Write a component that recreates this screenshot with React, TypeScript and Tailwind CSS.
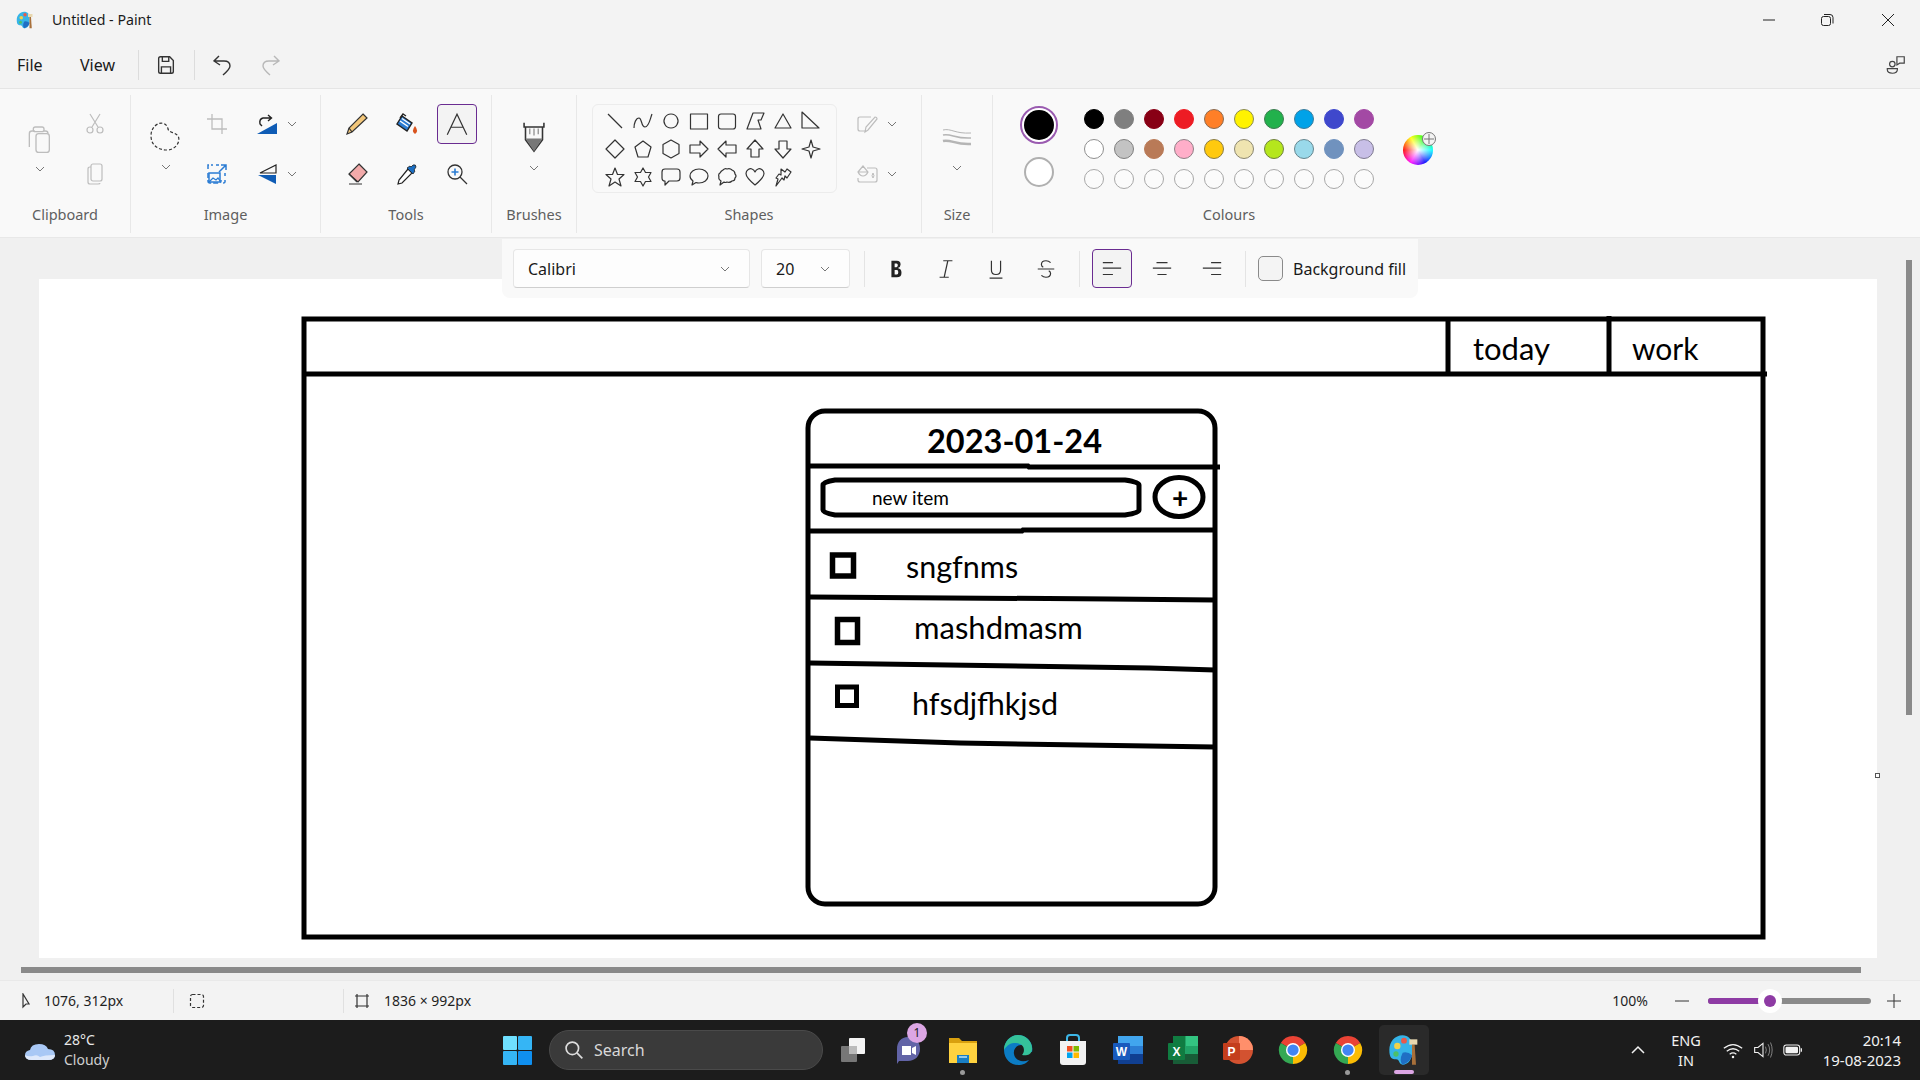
import type { ReactNode } from "react";
import clsx from "clsx";

const ui = "font-['Noto_Sans','Open_Sans',sans-serif]";
const calibri = "font-['Lato','Carlito',sans-serif]";

const row1 = [
  "bg-[#000000] border-[#000000]",
  "bg-[#7f7f7f] border-[#7f7f7f]",
  "bg-[#880015] border-[#880015]",
  "bg-[#ed1c24] border-[#ed1c24]",
  "bg-[#ff7f27] border-[#8a6a50]",
  "bg-[#fff200] border-[#8a8a50]",
  "bg-[#22b14c] border-[#3c7c50]",
  "bg-[#00a2e8] border-[#3a7c9c]",
  "bg-[#3f48cc] border-[#3f48cc]",
  "bg-[#a349a4] border-[#a349a4]",
];

const row2 = [
  "bg-[#ffffff] border-[#8f8f8f]",
  "bg-[#c3c3c3] border-[#7f7f7f]",
  "bg-[#b97a57] border-[#b97a57]",
  "bg-[#ffaec9] border-[#8f7f85]",
  "bg-[#ffc90e] border-[#8a7c45]",
  "bg-[#efe4b0] border-[#8a8670]",
  "bg-[#b5e61d] border-[#6f8040]",
  "bg-[#99d9ea] border-[#64858e]",
  "bg-[#7092be] border-[#7092be]",
  "bg-[#c8bfe7] border-[#7f7a90]",
];

function Chevron({ className }: { className?: string }) {
  return (
    <svg viewBox="0 0 12 12" className={clsx("h-3 w-3 shrink-0", className)} fill="none" stroke="#777" strokeWidth="1">
      <path d="M2 4l4 4 4-4" />
    </svg>
  );
}

function Group({ label, className, children }: { label: string; className: string; children: ReactNode }) {
  return (
    <div className={clsx("flex h-[138px] shrink-0 flex-col", className)}>
      <div className="h-[107px] pt-[4px]">{children}</div>
      <div className="text-center text-[14.500px] leading-[24px] text-[#5f5f5f]">{label}</div>
    </div>
  );
}

function Ico({ children, size = 24, box = 24 }: { children: ReactNode; size?: number; box?: number }) {
  return (
    <svg viewBox={`0 0 ${box} ${box}`} width={size} height={size} fill="none" className="shrink-0">
      {children}
    </svg>
  );
}

const shapePaths = [
  "M3 3l14 14",
  "M1 17c0-5 2-10 5-10s2 9 6 9 5-8 7-13",
  "M10 3a7 7 0 1 0 .01 0z",
  "M1.500 3h17v15h-17z",
  "M4 3h12q2.500 0 2.500 2.500v10q0 2.500-2.500 2.500h-12q-2.500 0-2.500-2.500v-10q0-2.500 2.500-2.500z",
  "M8 2h11l-3 7h-3l3 9H2z",
  "M10 3l8 14H2z",
  "M1 1l17 16H1z",
  "M10 1l9 9-9 9-9-9z",
  "M10 2l8 6-3 10H5L2 8z",
  "M10 1l8 4.500v9L10 19l-8-4.500v-9z",
  "M1 6h10V2l8 8-8 8v-4H1z",
  "M19 6H9V2l-8 8 8 8v-4h10z",
  "M10 1l8 9h-4v8H6v-8H2z",
  "M6 2h8v8h4l-8 9-8-9h4z",
  "M10 1l2 7 7 2-7 2-2 7-2-7-7-2 7-2z",
  "M10 1l2.500 6.500H19l-5 4.500 2 7-6-4-6 4 2-7-5-4.500h6.500z",
  "M10 1l2.500 4.500H18l-2.500 4.500 2.500 4.500h-5.500L10 19l-2.500-4.500H2L4.500 10 2 5.500h5.500z",
  "M4 2h12q3 0 3 3v6q0 3-3 3H8l-4 4v-4q-3 0-3-3V5q0-3 3-3z",
  "M10 2c5 0 9 3 9 7s-4 7-9 7q-2 0-3-.5L3 18l1-4q-3-2-3-5c0-4 4-7 9-7z",
  "M6 3q2-2 4-1 3-1 5 1 3 1 3 4 2 2 0 4 0 3-3 3-2 2-5 1-2 1-3 0l-4 3 1-4q-3-2-2-4-1-3 1-4 1-2 3-3z",
  "M10 18C4 13 1 10 1 6.500 1 3 5 1 7 2q2 .8 3 3 1-2.200 3-3c2-1 6 1 6 4.500 0 3.500-3 6.500-9 11.500z",
  "M8 2l4 3 2-3 4 3-4 6-2-2-1 4-2-2-6 8 2-7-2-1 3-4 2 1z",
];

function ShapeIcon({ d }: { d: string }) {
  return (
    <svg viewBox="0 0 20 20" width="20" height="20" fill="none" stroke="#333" strokeWidth="1.200" strokeLinejoin="round">
      <path d={d} />
    </svg>
  );
}

function TitleBar() {
  return (
    <div className="flex h-[45px] items-center pb-[5px] pl-[16px]">
      <PaintLogo size={18} />
      <span className="ml-[18px] text-[14.200px] text-[#1a1a1a]">Untitled - Paint</span>
      <div className="ml-auto flex items-center">
        <div className="flex w-[58px] justify-center">
          <Ico size={14} box={14}><path d="M1 7h12" stroke="#222" /></Ico>
        </div>
        <div className="flex w-[58px] justify-center">
          <Ico size={14} box={14}>
            <rect x="1.500" y="3.500" width="9" height="9" rx="2" stroke="#222" />
            <path d="M4 1.500h6q3 0 3 3v6" stroke="#222" />
          </Ico>
        </div>
        <div className="flex w-[64px] justify-center">
          <Ico size={14} box={14}><path d="M1 1l12 12M13 1L1 13" stroke="#222" /></Ico>
        </div>
      </div>
    </div>
  );
}

function MenuBar() {
  return (
    <div className="flex h-[44px] items-center border-b border-[#e5e5e5] pb-[3px] pl-[17px] pr-[13px] text-[16px] text-[#1a1a1a]">
      <span className="w-[63px]">File</span>
      <span className="w-[58px]">View</span>
      <div className="h-[30px] w-px bg-[#dcdcdc]" />
      <div className="ml-[16px]">
        <Ico size={22}>
          <path d="M4 5q0-2 2-2h10l4 4v12q0 2-2 2H6q-2 0-2-2z" stroke="#333" strokeWidth="1.500" />
          <path d="M8 3v5h7V3M7 21v-7h10v7" stroke="#333" strokeWidth="1.500" />
        </Ico>
      </div>
      <div className="ml-[17px] h-[30px] w-px bg-[#dcdcdc]" />
      <div className="ml-[16px]">
        <Ico size={24}>
          <path d="M8 3L3 8l6 4M3 8h10q6 0 6 5 0 3-7 9" stroke="#333" strokeWidth="1.400" />
        </Ico>
      </div>
      <div className="ml-[23px]">
        <Ico size={24}>
          <path d="M16 3l5 5-6 4M21 8H11q-6 0-6 5 0 3 7 9" stroke="#b8b8b8" strokeWidth="1.400" />
        </Ico>
      </div>
      <div className="ml-auto">
        <Ico size={22}>
          <circle cx="8" cy="11" r="3" stroke="#444" strokeWidth="1.300" />
          <path d="M2.500 16h11v1q0 4-5.500 4t-5.500-4z" stroke="#444" strokeWidth="1.300" />
          <path d="M13 3h8v7h-5l-3 2z" stroke="#444" strokeWidth="1.300" />
        </Ico>
      </div>
    </div>
  );
}

function Ribbon() {
  return (
    <div className="flex h-[149px] items-start border-b border-[#e8e8e8] bg-[#f9f9f9] pt-[6px]">
      <Group label="Clipboard" className="w-[131px] border-r border-[#e8e8e8]">
        <div className="flex">
          <div className="flex w-[80px] flex-col items-center pt-[24px]">
            <Ico size={32}>
              <path d="M8 6H6q-2 0-2 2v10" stroke="#bdbdbd" strokeWidth="1" />
              <rect x="7" y="3" width="8" height="3.500" rx="1.500" stroke="#bdbdbd" strokeWidth="1" />
              <rect x="9" y="8" width="10" height="14" rx="2" stroke="#bdbdbd" strokeWidth="1" />
              <path d="M15 6h1q2 0 2 2" stroke="#bdbdbd" strokeWidth="1" />
            </Ico>
            <Chevron className="mt-[8px]" />
          </div>
          <div className="flex w-[30px] flex-col">
            <div className="flex h-[50px] items-center justify-center">
              <Ico size={24}>
                <path d="M7 2l8 13M17 2L9 15" stroke="#bdbdbd" strokeWidth="1.200" />
                <circle cx="7" cy="18" r="3" stroke="#bdbdbd" strokeWidth="1.200" />
                <circle cx="17" cy="18" r="3" stroke="#bdbdbd" strokeWidth="1.200" />
              </Ico>
            </div>
            <div className="flex h-[50px] items-center justify-center">
              <Ico size={24}>
                <rect x="8" y="2" width="11" height="17" rx="2" stroke="#bdbdbd" strokeWidth="1.200" />
                <path d="M8 5H7q-2 0-2 2v13q0 2 2 2h8q2 0 2-1" stroke="#bdbdbd" strokeWidth="1.200" />
              </Ico>
            </div>
          </div>
        </div>
      </Group>

      <Group label="Image" className="w-[190px] border-r border-[#e8e8e8]">
        <div className="flex">
          <div className="flex w-[70px] flex-col items-center pt-[22px]">
            <Ico size={34} box={34}>
              <path d="M6 5c5-5 12-3 13 3 1 4 7 3 10 7 3 5-2 14-11 14C9 29 2 24 2 15 2 11 3 8 6 5z" stroke="#333" strokeWidth="1.200" strokeDasharray="3 2" />
            </Ico>
            <Chevron className="mt-[6px]" />
          </div>
          <div className="flex w-[32px] flex-col">
            <div className="flex h-[50px] items-center justify-center">
              <Ico size={24}>
                <path d="M7 2v15h15M2 7h15v15" stroke="#bdbdbd" strokeWidth="1.300" />
              </Ico>
            </div>
            <div className="flex h-[50px] items-center justify-center">
              <Ico size={24}>
                <path d="M3 7V3h5M11 3h3M3 11v8q0 2 2 2h9q2 0 2-2v-1M20 11v3M20 18v2q0 1-2 1" stroke="#2b7cd3" strokeWidth="1.500" strokeDasharray="5 2" />
                <path d="M14 10l7-7M16 3h5v5" stroke="#2b7cd3" strokeWidth="1.500" />
                <rect x="4" y="11" width="11" height="9" stroke="#2b7cd3" strokeWidth="1.500" />
                <path d="M4 20l4-4 3 2 2-2 2 3" stroke="#2b7cd3" strokeWidth="1.200" />
              </Ico>
            </div>
          </div>
          <div className="flex flex-col pl-[22px]">
            <div className="flex h-[50px] items-center gap-[7px]">
              <Ico size={24}>
                <path d="M5 12q-1-5 3-6h8M13 3l3.500 3L13 9M5 12l2 2" stroke="#222" strokeWidth="1.400" />
                <path d="M2 22l20-11v11z" fill="#0f5cb5" />
              </Ico>
              <Chevron />
            </div>
            <div className="flex h-[50px] items-center gap-[7px]">
              <Ico size={24}>
                <path d="M21 11H5l16-8z" stroke="#222" strokeWidth="1.200" />
                <path d="M3 13h18v9z" fill="#0f5cb5" />
              </Ico>
              <Chevron />
            </div>
          </div>
        </div>
      </Group>

      <Group label="Tools" className="w-[171px] border-r border-[#e8e8e8]">
        <div className="grid grid-cols-[50px_50px_50px] pl-[11px]">
          <div className="flex h-[50px] items-center justify-center">
            <Ico size={24}>
              <path d="M18 2l4 4L7 20l-5 2 2-6z" fill="#f3c77a" stroke="#333" strokeWidth="1.200" />
              <path d="M4 16l3 4" stroke="#333" strokeWidth="1.200" />
            </Ico>
          </div>
          <div className="flex h-[50px] items-center justify-center">
            <Ico size={24}>
              <path d="M7 4l10 7-5 8-10-7z" fill="#2b7cd3" stroke="#222" strokeWidth="1.400" />
              <path d="M5 9l8 5.500M7 6.500l8 5.500" stroke="#fff" strokeWidth="1.400" />
              <path d="M5 6l3-4 3 2" stroke="#222" strokeWidth="1.300" />
              <path d="M20 14q4 5 0 8-4-3 0-8z" fill="#d9541e" />
            </Ico>
          </div>
          <div className="flex h-[50px] items-center justify-center">
            <div className="flex h-[40px] w-[40px] items-center justify-center rounded-[4px] border border-[#6a2c91] bg-[#f3f3f3]">
              <Ico size={26}>
                <path d="M3 22L12 3l9 19M6.500 15h11" stroke="#333" strokeWidth="1.100" />
              </Ico>
            </div>
          </div>
          <div className="flex h-[50px] items-center justify-center">
            <Ico size={24}>
              <path d="M14 2l8 8-9 10-9-8z" fill="#f2aaaa" stroke="#333" strokeWidth="1.200" />
              <path d="M4 12l8 8M4 22h13" stroke="#333" strokeWidth="1.200" />
            </Ico>
          </div>
          <div className="flex h-[50px] items-center justify-center">
            <Ico size={24}>
              <path d="M13 7l4 4-10 10-4 1 1-4z" fill="#fff" stroke="#222" strokeWidth="1.200" />
              <path d="M12 6l6 6 2-3-1-1 2-3q0-3-3-2l-2 2-1-1z" fill="#1b6ec2" stroke="#222" strokeWidth=".8" />
            </Ico>
          </div>
          <div className="flex h-[50px] items-center justify-center">
            <Ico size={24}>
              <circle cx="10" cy="10" r="7" stroke="#333" strokeWidth="1.300" />
              <path d="M15 15l7 7" stroke="#333" strokeWidth="1.300" />
              <path d="M10 6.500v7M6.500 10h7" stroke="#2b7cd3" strokeWidth="1.600" />
            </Ico>
          </div>
        </div>
      </Group>

      <Group label="Brushes" className="w-[85px] border-r border-[#e8e8e8]">
        <div className="flex flex-col items-center pt-[21px]">
          <Ico size={34} box={24}>
            <path d="M5 2v3h14V2M6 5v9l6 8 6-8V5" stroke="#333" strokeWidth="1.100" />
            <path d="M6 13h12l-6 9z" fill="#777" />
            <path d="M9 6v4M12 6v5M15 6v4" stroke="#999" strokeWidth="1" />
          </Ico>
          <Chevron className="mt-[8px]" />
        </div>
      </Group>

      <Group label="Shapes" className="w-[345px] border-r border-[#e8e8e8]">
        <div className="flex">
          <div className="ml-[15px] mt-[5px] grid h-[89px] w-[245px] grid-cols-[repeat(8,28px)] auto-rows-[28px] rounded-[6px] border border-[#ececec] pl-[8px] pt-[2px]">
            {shapePaths.map((d) => (
              <div key={d} className="flex items-center justify-center">
                <ShapeIcon d={d} />
              </div>
            ))}
          </div>
          <div className="ml-[18px] flex flex-col">
            <div className="flex h-[50px] items-center gap-[7px]">
              <Ico size={24}>
                <path d="M16 5H5q-2 0-2 2v10q0 2 2 2h6" stroke="#bdbdbd" strokeWidth="1.200" />
                <path d="M10 20l1-5L20 5q2 0 2 2L13 18z" stroke="#bdbdbd" strokeWidth="1.200" />
              </Ico>
              <Chevron />
            </div>
            <div className="flex h-[50px] items-center gap-[7px]">
              <Ico size={24}>
                <path d="M12 6h8q2 0 2 2v10q0 2-2 2H5q-2 0-2-2v-2" stroke="#bdbdbd" strokeWidth="1.200" />
                <path d="M3 10l5-6 5 6q-2 4-5 4t-5-4zM3 10h10" stroke="#bdbdbd" strokeWidth="1.200" />
                <path d="M18 11q2 3 0 5-2-2 0-5z" stroke="#bdbdbd" strokeWidth="1" />
              </Ico>
              <Chevron />
            </div>
          </div>
        </div>
      </Group>

      <Group label="Size" className="w-[71px] border-r border-[#e8e8e8]">
        <div className="flex flex-col items-center pt-[28px]">
          <svg width="30" height="24" viewBox="0 0 30 24" fill="none" stroke="#b5b5b5">
            <path d="M1 3c8-2 12 4 28 3" strokeWidth="1" />
            <path d="M1 8c8-2 12 4 28 3" strokeWidth="1.500" />
            <path d="M1 14c8-2 12 4 28 3" strokeWidth="2.500" />
          </svg>
          <Chevron className="mt-[11px]" />
        </div>
      </Group>

      <Group label="Colours" className="w-[472px]">
        <div className="flex">
          <div className="flex w-[86px] flex-col gap-[13px] pl-[27px] pt-[7px]">
            <div className="flex h-[38px] w-[38px] items-center justify-center rounded-full border-2 border-[#9a5bb0] bg-white">
              <div className="h-[30px] w-[30px] rounded-full bg-black" />
            </div>
            <div className="ml-[4px] h-[30px] w-[30px] rounded-full border-2 border-[#b0b0b0] bg-white" />
          </div>
          <div className="mt-[5px] grid grid-cols-[repeat(10,30px)] auto-rows-[30px]">
            {[...row1, ...row2].map((c) => (
              <div key={c} className="flex items-center justify-center">
                <div className={clsx("h-[20px] w-[20px] rounded-full border", c)} />
              </div>
            ))}
            {Array.from({ length: 10 }).map((_, i) => (
              <div key={i} className="flex items-center justify-center">
                <div className="h-[20px] w-[20px] rounded-full border border-[#a8a8a8] bg-[#fbfbfb]" />
              </div>
            ))}
          </div>
          <div className="relative ml-[24px] mt-[36px] h-[30px] w-[30px] rounded-full bg-[radial-gradient(circle,white,transparent_75%),conic-gradient(from_270deg,red,yellow,lime,aqua,blue,magenta,red)]">
            <div className="absolute left-[19px] top-[-3px] flex h-[14px] w-[14px] items-center justify-center rounded-full border border-[#777] bg-[#f4f4f4]">
              <Ico size={10} box={10}><path d="M5 0v10M0 5h10" stroke="#777" /></Ico>
            </div>
          </div>
        </div>
      </Group>
    </div>
  );
}

function TextToolbar() {
  return (
    <div className="absolute left-[502px] top-px z-10 flex h-[59px] w-[916px] items-center rounded-b-[8px] bg-[#f9f9f9] pl-[11px] text-[#1a1a1a]">
      <div className="flex h-[39px] w-[237px] items-center justify-between rounded-[4px] border border-[#e6e6e6] border-b-[#cfcfcf] bg-[#fdfdfd] pl-[14px] pr-[18px] text-[16px]">
        Calibri
        <Chevron />
      </div>
      <div className="ml-[11px] flex h-[39px] w-[89px] items-center justify-between rounded-[4px] border border-[#e6e6e6] border-b-[#cfcfcf] bg-[#fdfdfd] pl-[14px] pr-[18px] text-[16px]">
        20
        <Chevron />
      </div>
      <div className="ml-[14px] h-[36px] w-px bg-[#e4e4e4]" />
      <div className="ml-[6px] flex">
        <div className="flex w-[50px] justify-center">
          <Ico size={22}><path d="M7 3h6q4 0 4 4 0 3-3 4 4 1 4 5 0 5-5 5H7zM10.500 6v4h2q1.500 0 1.500-2t-1.500-2zM10.500 13v5h2.500q1.500 0 1.500-2.500T13 13z" fill="#222" fillRule="evenodd" /></Ico>
        </div>
        <div className="flex w-[50px] justify-center">
          <Ico size={22}><path d="M9 3h10M5 21h10M14 3l-4 18" stroke="#333" strokeWidth="1.300" /></Ico>
        </div>
        <div className="flex w-[50px] justify-center">
          <Ico size={22}><path d="M7 3v10q0 5 5 5t5-5V3M5 22h14" stroke="#333" strokeWidth="1.300" /></Ico>
        </div>
        <div className="flex w-[50px] justify-center">
          <Ico size={22}><path d="M17 5q-2-2-5-2-5 0-5 4 0 2 2 3M15 14q2 1 2 3 0 4-5 4-3 0-5-2M3 12h18" stroke="#333" strokeWidth="1.300" /></Ico>
        </div>
      </div>
      <div className="ml-[8px] h-[36px] w-px bg-[#e4e4e4]" />
      <div className="ml-[12px] flex h-[39px] w-[40px] items-center justify-center rounded-[4px] border border-[#6a2c91] bg-[#f3f3f3]">
        <Ico size={22}><path d="M2 5h11M2 11h20M2 18h11" stroke="#333" strokeWidth="1.300" /></Ico>
      </div>
      <div className="ml-[10px] flex w-[40px] justify-center">
        <Ico size={22}><path d="M6 5h12M2 11h20M7 18h10" stroke="#333" strokeWidth="1.300" /></Ico>
      </div>
      <div className="ml-[10px] flex w-[40px] justify-center">
        <Ico size={22}><path d="M11 5h11M2 11h20M11 18h11" stroke="#333" strokeWidth="1.300" /></Ico>
      </div>
      <div className="ml-[13px] h-[36px] w-px bg-[#e4e4e4]" />
      <div className="ml-[12px] h-[25px] w-[25px] rounded-[5px] border border-[#8a8a8a] bg-[#f4f4f4]" />
      <span className="ml-[10px] text-[16px]">Background fill</span>
    </div>
  );
}

function Sketch() {
  return (
    <div className="relative h-[992px] w-[1838px] bg-white text-black">
      <svg className="absolute left-0 top-0" width="1836" height="992" viewBox="39 279 1836 992" fill="none" stroke="#000" strokeWidth="4">
        <rect x="304" y="319" width="1459" height="618" strokeWidth="5" />
        <path d="M303 374h1464" strokeWidth="5" />
        <path d="M1448 318v55M1609 316v57" strokeWidth="5" />
        <rect x="808" y="411" width="407" height="493" rx="17" strokeWidth="5" />
        <path d="M808 466h220l1 1h191" strokeWidth="5" />
        <path d="M810 531h212l1-1h192" strokeWidth="5" />
        <path d="M810 597l300 2 105 1" strokeWidth="5" />
        <path d="M810 663l340 5 65 2" strokeWidth="5" />
        <path d="M810 738l150 5 255 4" strokeWidth="5" />
        <path d="M835 480h290q14 2 14 5v25q0 3-14 5H835q-12-2-12-5v-25q0-3 12-5z" strokeWidth="5" />
        <ellipse cx="1179" cy="497" rx="24" ry="19.500" strokeWidth="5" />
        <rect x="832.500" y="555" width="21" height="21" strokeWidth="5.500" />
        <rect x="837.500" y="619.500" width="20" height="23" strokeWidth="5.500" />
        <rect x="837.500" y="687" width="19" height="18.500" strokeWidth="5" />
      </svg>
      <span className={clsx(calibri, "absolute left-[1434px] top-[49px] text-[31px] leading-[40px]")}>today</span>
      <span className={clsx(calibri, "absolute left-[1593px] top-[49px] text-[30px] leading-[40px]")}>work</span>
      <span className={clsx(calibri, "absolute left-[888px] top-[142px] text-[32.500px] font-bold leading-[40px]")}>2023-01-24</span>
      <span className={clsx(calibri, "absolute left-[833px] top-[208px] text-[19px] leading-[22px]")}>new item</span>
      <span className={clsx(calibri, "absolute left-[1133px] top-[200px] text-[28px] font-bold leading-[36px]")}>+</span>
      <span className={clsx(calibri, "absolute left-[867px] top-[267px] text-[30.500px] leading-[40px]")}>sngfnms</span>
      <span className={clsx(calibri, "absolute left-[875px] top-[328px] text-[31px] leading-[40px]")}>mashdmasm</span>
      <span className={clsx(calibri, "absolute left-[873px] top-[404px] text-[30.500px] leading-[40px]")}>hfsdjfhkjsd</span>
      <div className="absolute right-[-3px] top-[494px] h-[5px] w-[5px] border border-[#555] bg-white" />
    </div>
  );
}

function CanvasArea() {
  return (
    <div className="relative h-[742px] overflow-hidden bg-[#f0f0f0] pl-[39px] pt-[41px]">
      <TextToolbar />
      <Sketch />
      <div className="absolute left-[1906px] top-[22px] h-[455px] w-[6px] bg-[#8a8a8a]" />
      <div className="absolute bottom-0 left-0 h-[22px] w-full bg-[#f0f0f0]" />
      <div className="absolute left-[21px] top-[729px] h-[6px] w-[1840px] bg-[#8a8a8a]" />
    </div>
  );
}

function StatusBar() {
  return (
    <div className="flex h-[40px] items-center border-t border-[#e9e9e9] pl-[20px] pr-[18px] text-[14px] text-[#1f1f1f]">
      <Ico size={16} box={16}><path d="M3 1v13l3-3 3 0z" stroke="#333" strokeWidth="1.200" /></Ico>
      <span className="ml-[8px] w-[129px]">1076, 312px</span>
      <div className="h-[24px] w-px bg-[#e0e0e0]" />
      <div className="ml-[15px]">
        <Ico size={16} box={16}><rect x="1.500" y="1.500" width="13" height="13" rx="2" stroke="#333" strokeWidth="1.200" strokeDasharray="3 2" /></Ico>
      </div>
      <div className="ml-[138px] h-[24px] w-px bg-[#e0e0e0]" />
      <div className="ml-[10px]">
        <Ico size={16} box={16}>
          <path d="M3 1v14M13 1v14M1 3h14M1 13h14" stroke="#333" strokeWidth="1.200" />
        </Ico>
      </div>
      <span className="ml-[14px]">1836 × 992px</span>
      <span className="ml-auto">100%</span>
      <div className="ml-[26px]">
        <Ico size={16} box={16}><path d="M1 8h14" stroke="#333" /></Ico>
      </div>
      <div className="relative ml-[18px] h-[6px] w-[163px] rounded-full bg-[#8a8a8a]">
        <div className="h-full w-[62px] rounded-full bg-[#8e3ba4]" />
        <div className="absolute left-[50px] top-[-9px] flex h-[24px] w-[24px] items-center justify-center rounded-full bg-white">
          <div className="h-[12px] w-[12px] rounded-full bg-[#8e3ba4]" />
        </div>
      </div>
      <div className="ml-[15px]">
        <Ico size={16} box={16}><path d="M1 8h14M8 1v14" stroke="#333" /></Ico>
      </div>
    </div>
  );
}

function PaintLogo({ size }: { size: number }) {
  return (
    <svg viewBox="0 0 24 24" width={size} height={size} className="shrink-0">
      <path d="M11 1C5 1 1 6 1 12s2 7 5 7c3 0 2 4 5 4 4 0 6-3 7-7V8C18 4 15 1 11 1z" fill="#35b4e8" />
      <circle cx="7" cy="9" r="2.400" fill="#f0d24a" />
      <circle cx="12" cy="5" r="2.200" fill="#e85a4a" />
      <circle cx="6" cy="15" r="2" fill="#4cc06a" />
      <path d="M11 14q4-1 7 2-1 5-7 7-3-3 0-9z" fill="#1f6fc4" />
      <path d="M18 8h2l1 15h-3z" fill="#a8703a" />
      <path d="M16 4h6v4h-6z" fill="#e8d8b0" />
    </svg>
  );
}

function Chrome() {
  return (
    <svg viewBox="0 0 32 32" width="30" height="30">
      <path d="M16 16L3 8.500A15 15 0 0 1 29 8.500z" fill="#ea4335" />
      <path d="M16 16l13-7.500A15 15 0 0 1 16 31z" fill="#fbbc04" />
      <path d="M16 16v15A15 15 0 0 1 3 8.500z" fill="#34a853" />
      <circle cx="16" cy="16" r="7.500" fill="#fff" />
      <circle cx="16" cy="16" r="6" fill="#4285f4" />
    </svg>
  );
}

function TaskbarApps() {
  return (
    <div className="ml-[2px] flex items-center">
      <div className="flex w-[55px] justify-center">
        <svg width="28" height="28" viewBox="0 0 28 28">
          <rect x="10" y="2" width="16" height="16" rx="1" fill="#f4f4f4" />
          <rect x="2" y="10" width="16" height="16" rx="1" fill="#777" />
          <rect x="10" y="10" width="8" height="8" fill="#bbb" />
        </svg>
      </div>
      <div className="relative flex w-[55px] justify-center">
        <svg width="30" height="30" viewBox="0 0 30 30">
          <path d="M15 2c8 0 12 5 12 12s-5 12-12 12H6l-2 3V14C4 7 8 2 15 2z" fill="#6264a7" />
          <path d="M9 11h9v9H9zM19 13l4-2v9l-4-2z" fill="#fff" />
        </svg>
        <div className="absolute left-[27px] top-[-12px] flex h-[20px] w-[20px] items-center justify-center rounded-full bg-[#dca6e4] text-[12px] text-[#222]">1</div>
      </div>
      <div className="relative flex w-[55px] justify-center">
        <svg width="30" height="30" viewBox="0 0 30 30">
          <path d="M1 3h10l3 3h15v4H1z" fill="#d9a00f" />
          <path d="M1 8h28v20H1z" fill="#ffd23f" />
          <path d="M9 20h12v8H9z" fill="#1a7fc4" />
          <path d="M11 22h8" stroke="#bfe3f7" strokeWidth="1.500" />
        </svg>
        <div className="absolute left-[25px] top-[35px] h-[5px] w-[5px] rounded-full bg-[#9a9a9a]" />
      </div>
      <div className="flex w-[55px] justify-center">
        <svg width="30" height="32" viewBox="0 0 30 32">
          <path d="M15 1C7 1 1 8 1 16c0 9 7 15 14 15 5 0 9-2 11-5-8 3-14 0-15-6-1-5 3-9 7-9 5 0 7 3 7 7h4c2-9-5-17-14-17z" fill="#0c7cc4" />
          <path d="M15 1c8 0 15 7 14 15-1 5-6 6-10 5 3-3 4-12-8-12C6 9 2 14 1 16 1 8 7 1 15 1z" fill="#35c29a" />
        </svg>
      </div>
      <div className="flex w-[55px] justify-center">
        <svg width="30" height="32" viewBox="0 0 30 32">
          <path d="M9 8V4q0-3 3-3h6q3 0 3 3v4" stroke="#3db7e8" strokeWidth="2" fill="none" />
          <path d="M2 7h26v21q0 3-3 3H5q-3 0-3-3z" fill="#f2f2f2" />
          <rect x="9" y="12" width="5.500" height="5.500" fill="#f25022" />
          <rect x="15.500" y="12" width="5.500" height="5.500" fill="#7fba00" />
          <rect x="9" y="18.500" width="5.500" height="5.500" fill="#00a4ef" />
          <rect x="15.500" y="18.500" width="5.500" height="5.500" fill="#ffb900" />
        </svg>
      </div>
      <div className="flex w-[55px] justify-center">
        <svg width="30" height="30" viewBox="0 0 30 30">
          <rect x="5" y="1" width="25" height="28" rx="1" fill="#2b7cd3" />
          <rect x="5" y="1" width="25" height="10" fill="#41a5ee" />
          <rect x="5" y="19" width="25" height="10" fill="#103f91" />
          <rect x="0" y="8" width="17" height="17" rx="1" fill="#185abd" />
          <text x="8.500" y="21" textAnchor="middle" fontSize="12" fontWeight="700" fill="#fff" fontFamily="Liberation Sans">W</text>
        </svg>
      </div>
      <div className="flex w-[55px] justify-center">
        <svg width="30" height="30" viewBox="0 0 30 30">
          <rect x="5" y="1" width="25" height="28" rx="1" fill="#21a366" />
          <rect x="5" y="1" width="12" height="10" fill="#107c41" />
          <rect x="18" y="1" width="12" height="10" fill="#33c481" />
          <rect x="5" y="19" width="25" height="10" fill="#185c37" />
          <rect x="0" y="8" width="17" height="17" rx="1" fill="#107c41" />
          <text x="8.500" y="21" textAnchor="middle" fontSize="12" fontWeight="700" fill="#fff" fontFamily="Liberation Sans">X</text>
        </svg>
      </div>
      <div className="flex w-[55px] justify-center">
        <svg width="30" height="30" viewBox="0 0 30 30">
          <circle cx="16" cy="15" r="14" fill="#d35230" />
          <path d="M16 1a14 14 0 0 1 14 14H16z" fill="#ff8f6b" />
          <rect x="0" y="8" width="17" height="17" rx="1" fill="#c43e1c" />
          <text x="8.500" y="21" textAnchor="middle" fontSize="12" fontWeight="700" fill="#fff" fontFamily="Liberation Sans">P</text>
        </svg>
      </div>
      <div className="flex w-[55px] justify-center"><Chrome /></div>
      <div className="relative flex w-[55px] justify-center">
        <Chrome />
        <div className="absolute left-[25px] top-[35px] h-[5px] w-[5px] rounded-full bg-[#9a9a9a]" />
      </div>
      <div className="relative ml-[4px] flex h-[50px] w-[50px] items-center justify-center rounded-[5px] bg-[#2a2a2a]">
        <PaintLogo size={32} />
        <div className="absolute bottom-[1px] left-[15px] h-[4px] w-[20px] rounded-full bg-[#dca6e4]" />
      </div>
    </div>
  );
}

function Taskbar() {
  return (
    <div className="flex h-[60px] items-center bg-[#1c1c1c] pl-[24px] text-[14px] text-[#e8e8e8]">
      <svg width="32" height="22" viewBox="0 0 32 22" className="shrink-0">
        <path d="M8 21q-7 0-7-5 0-4 5-5 1-6 9-6 7 0 9 5 7 0 7 6 0 5-7 5z" fill="#a9c8f5" />
        <path d="M8 21q-7 0-7-5 3 2 8 1 4-2 7 1 4-2 15-2 0 5-7 5z" fill="#dfe9fb" />
      </svg>
      <div className="ml-[8px] flex w-[81px] flex-col leading-[20px]">
        <span>28°C</span>
        <span className="text-[#cfcfcf]">Cloudy</span>
      </div>
      <svg width="29" height="29" viewBox="0 0 29 29" className="ml-[358px] shrink-0">
        <rect x="0" y="0" width="14" height="14" rx="1" fill="#6fe0ff" />
        <rect x="15" y="0" width="14" height="14" rx="1" fill="#35b5f5" />
        <rect x="0" y="15" width="14" height="14" rx="1" fill="#35b5f5" />
        <rect x="15" y="15" width="14" height="14" rx="1" fill="#0f8fef" />
      </svg>
      <div className="ml-[17px] flex h-[40px] w-[274px] items-center rounded-full border border-[#4a4a4a] bg-[#3a3a3a] pl-[14px] text-[16px] text-[#d8d8d8]">
        <Ico size={20}><circle cx="10" cy="10" r="7.500" stroke="#ddd" strokeWidth="2" /><path d="M15.500 15.500L22 22" stroke="#ddd" strokeWidth="2" /></Ico>
        <span className="ml-[10px]">Search</span>
      </div>
      <TaskbarApps />
      <div className="ml-auto flex items-center pr-[19px] text-[#f2f2f2]">
        <Ico size={16} box={16}><path d="M2 11l6-6 6 6" stroke="#f2f2f2" strokeWidth="1.500" /></Ico>
        <div className="ml-[8px] flex w-[64px] flex-col items-center text-[14.500px] leading-[20px]">
          <span>ENG</span>
          <span>IN</span>
        </div>
        <div className="ml-[5px]">
          <Ico size={20}>
            <path d="M1 10q11-9 22 0M4.500 13.500q7.500-6 15 0M8 17q4-3 8 0" stroke="#f2f2f2" strokeWidth="1.500" />
            <circle cx="12" cy="20.500" r="1.500" fill="#f2f2f2" />
          </Ico>
        </div>
        <div className="ml-[10px]">
          <Ico size={20}>
            <path d="M2 9h4l6-5v16l-6-5H2z" stroke="#f2f2f2" strokeWidth="1.300" />
            <path d="M15 8q2 4 0 8M18 5q4 7 0 14M21 3q4 9 0 18" stroke="#8a8a8a" strokeWidth="1.100" />
          </Ico>
        </div>
        <div className="ml-[10px]">
          <Ico size={20}>
            <rect x="1" y="6" width="19" height="12" rx="3" stroke="#f2f2f2" strokeWidth="1.300" />
            <rect x="3" y="8" width="15" height="8" rx="1.500" fill="#f2f2f2" />
            <path d="M22 10v4" stroke="#f2f2f2" strokeWidth="1.500" />
          </Ico>
        </div>
        <div className="ml-[20px] flex w-[78px] flex-col items-end whitespace-nowrap text-[15px] leading-[20px]">
          <span>20:14</span>
          <span>19-08-2023</span>
        </div>
      </div>
    </div>
  );
}

export default function App() {
  return (
    <div className={clsx(ui, "h-[1080px] w-[1920px] overflow-hidden bg-[#f3f3f3]")}>
      <TitleBar />
      <MenuBar />
      <Ribbon />
      <CanvasArea />
      <StatusBar />
      <Taskbar />
    </div>
  );
}
